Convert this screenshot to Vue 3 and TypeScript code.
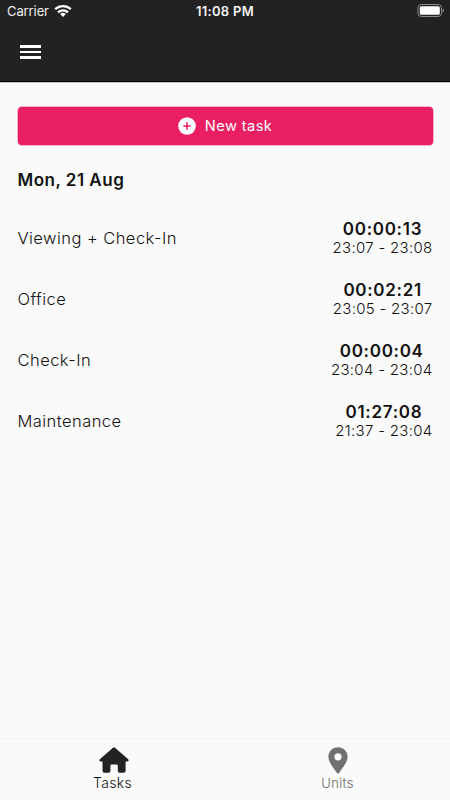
<script setup lang="ts">
interface Task {
  name: string
  duration: string
  start: string
  end: string
}

const tasks: Task[] = [
  { name: 'Viewing + Check-In', duration: '00:00:13', start: '23:07', end: '23:08' },
  { name: 'Office', duration: '00:02:21', start: '23:05', end: '23:07' },
  { name: 'Check-In', duration: '00:00:04', start: '23:04', end: '23:04' },
  { name: 'Maintenance', duration: '01:27:08', start: '21:37', end: '23:04' },
]
</script>

<template>
  <div class="screen">
    <header class="header">
      <div class="status">
        <div class="carrier">
          <span>Carrier</span>
          <svg class="wifi" width="18" height="14" viewBox="0 0 18 14">
            <path d="M1.2 5.2a11.3 11.3 0 0 1 15.6 0" />
            <path d="M4 8.3a7.3 7.3 0 0 1 10 0" />
            <path class="dot" d="M9 13 L6.1 10.1a4.2 4.2 0 0 1 5.8 0z" />
          </svg>
        </div>
        <span class="clock">11:08 PM</span>
        <svg class="battery" width="28" height="14" viewBox="0 0 28 14">
          <rect class="case" x="1" y="0.5" width="23.5" height="12" rx="3.3" />
          <rect class="level" x="2.8" y="2.2" width="20" height="8.6" rx="1.6" />
          <path class="tip" d="M25.6 4.4a2.1 2.1 0 0 1 0 4z" />
        </svg>
      </div>
      <button class="menu" aria-label="Menu">
        <span></span><span></span><span></span>
      </button>
    </header>

    <main class="content">
      <button class="new-task">
        <svg width="18" height="18" viewBox="0 0 18 18">
          <circle cx="9" cy="9" r="8.8" fill="#fff" />
          <path d="M9 5.9v6.2M5.9 9h6.2" stroke="#e91e63" stroke-width="1.6" stroke-linecap="round" />
        </svg>
        <span>New task</span>
      </button>
      <h2 class="date">Mon, 21 Aug</h2>
      <ul class="tasks">
        <li v-for="task in tasks" :key="task.start" class="task">
          <span class="name">{{ task.name }}</span>
          <div class="time">
            <span class="duration">{{ task.duration }}</span>
            <span class="range">{{ task.start }} - {{ task.end }}</span>
          </div>
        </li>
      </ul>
    </main>

    <nav class="tabs">
      <a class="tab active">
        <svg width="30" height="26" viewBox="0 0 30 26">
          <path d="M14 .7Q15 0 16 .7L29.2 12.3Q30.4 14.3 28.4 14.5H26.6V24Q26.6 25.8 24.8 25.8H20.6Q18.8 25.8 18.8 24V18.8Q18.8 17.4 17.4 17.4H12.8Q11.4 17.4 11.4 18.8V24Q11.4 25.8 9.6 25.8H5.3Q3.5 25.8 3.5 24V14.5H1.6Q-.4 14.3.8 12.3Z" />
        </svg>
        <span>Tasks</span>
      </a>
      <a class="tab">
        <svg width="20" height="27" viewBox="0 0 20 27">
          <path fill-rule="evenodd" d="M10 .3C4.6.3.4 4.5.4 9.8c0 3.9 2.5 8 8.6 16.1q1 1.2 2 0c6.1-8.1 8.6-12.2 8.6-16.1C19.6 4.5 15.4.3 10 .3ZM10 6.2a3.6 3.6 0 1 1 0 7.2a3.6 3.6 0 0 1 0-7.2Z" />
        </svg>
        <span>Units</span>
      </a>
    </nav>
  </div>
</template>

<style>
body {
  background: #fafafa;
}
</style>

<style scoped>
.screen {
  width: 450px;
  height: 800px;
  display: flex;
  flex-direction: column;
  background: #fafafa;
  color: #121212;
  font-family: Inter, "Liberation Sans", sans-serif;
  overflow: hidden;
}

button {
  border: 0;
  padding: 0;
  font: inherit;
}

.header {
  height: 82px;
  box-sizing: border-box;
  flex: none;
  background: #222;
  border-bottom: 1px solid #050505;
  box-shadow: 0 1px 0 #c4c4c4;
  color: #fff;
}

.status {
  height: 23px;
  display: grid;
  grid-template-columns: 1fr auto 1fr;
  align-items: center;
  padding: 0 5px 0 7px;
}

.carrier {
  display: flex;
  align-items: center;
  gap: 5px;
  font-size: 13px;
  line-height: 23px;
  letter-spacing: -0.1px;
  color: #eee;
}

.wifi {
  margin-top: -2px;
}

.wifi path {
  fill: none;
  stroke: #fff;
  stroke-width: 2.3;
}

.wifi .dot {
  fill: #fff;
  stroke: none;
}

.clock {
  margin-left: -2px;
  font-size: 13px;
  font-weight: 600;
  line-height: 23px;
  letter-spacing: 0.3px;
  color: #f4f4f4;
}

.battery {
  justify-self: end;
  margin-top: -1px;
}

.case {
  fill: none;
  stroke: #8b8b8b;
  stroke-width: 1;
}

.level {
  fill: #fff;
}

.tip {
  fill: #8b8b8b;
}

.menu {
  display: flex;
  flex-direction: column;
  gap: 3px;
  width: 21px;
  margin: 22px 0 0 20px;
  background: none;
}

.menu span {
  height: 2.5px;
  background: #fff;
}

.content {
  flex: 1;
  padding: 25px 17.5px 0;
}

.new-task {
  width: 100%;
  height: 38px;
  display: flex;
  align-items: center;
  justify-content: center;
  gap: 9px;
  border-radius: 4px;
  background: #e91e63;
  box-shadow: 0 0 0 0.5px #f06a98;
  color: #fff;
  font-size: 14.6px;
  letter-spacing: 0.42px;
}

.new-task span {
  margin-top: -1px;
}

.date {
  margin: 24px 0 0;
  font-size: 17px;
  line-height: 22px;
  font-weight: 600;
  letter-spacing: 0.5px;
}

.tasks {
  margin: 17px 0 0;
  padding: 0;
  list-style: none;
}

.task {
  height: 61px;
  display: flex;
  align-items: center;
  justify-content: space-between;
}

.name {
  margin-top: -1px;
  font-size: 16.5px;
  font-weight: 300;
  letter-spacing: 0.45px;
}

.time {
  display: flex;
  flex-direction: column;
  align-items: center;
}

.duration {
  font-size: 17px;
  line-height: 20px;
  font-weight: 600;
  letter-spacing: 0.7px;
}

.range {
  margin-top: -1px;
  margin-bottom: 1px;
  font-size: 15px;
  line-height: 19px;
  font-weight: 300;
  letter-spacing: 0.3px;
}

.tabs {
  height: 62px;
  box-sizing: border-box;
  flex: none;
  display: grid;
  grid-template-columns: 1fr 1fr;
  border-top: 1px solid #f3f3f3;
}

.tab {
  display: flex;
  flex-direction: column;
  align-items: center;
  padding-top: 8px;
  color: #686868;
  fill: #707070;
  font-size: 13px;
  font-weight: 300;
  line-height: 19px;
  letter-spacing: 0.35px;
}

.tab.active {
  color: #111;
  fill: #222;
  font-size: 14px;
}

.tab.active svg {
  margin-left: 3px;
}
</style>
